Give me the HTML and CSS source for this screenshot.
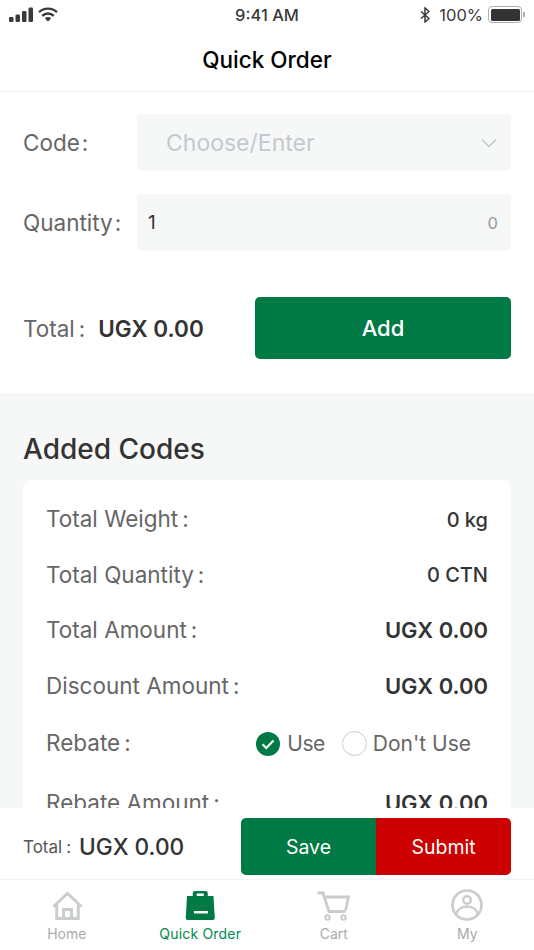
FILE: index.html
```html
<!DOCTYPE html>
<html lang="en">
<head>
<meta charset="utf-8">
<title>Quick Order</title>
<link rel="stylesheet" href="styles.css">
</head>
<body>
<div class="app">
  <div class="status">
    <div class="status-left">
      <svg class="sig" width="25" height="15" viewBox="0 0 25 15"><rect x="0" y="10" width="4.500" height="5" rx="1.200"/><rect x="6.500" y="7.500" width="4.500" height="7.500" rx="1.200"/><rect x="13" y="4" width="4.500" height="11" rx="1.200"/><rect x="19.500" y="0.500" width="4.500" height="14.500" rx="1.200"/></svg>
      <svg class="wifi" width="20" height="15" viewBox="0 0 20 15"><path d="M1 5.200a13 13 0 0 1 18 0" fill="none" stroke="#3a3a3a" stroke-width="2.300"/><path d="M4.200 8.800a8.400 8.400 0 0 1 11.600 0" fill="none" stroke="#3a3a3a" stroke-width="2.300"/><path d="M6.900 11.300a4.600 4.600 0 0 1 6.200 0L10 14.800z" fill="#3a3a3a"/></svg>
    </div>
    <div class="time">9:41 AM</div>
    <div class="status-right">
      <svg width="10" height="16" viewBox="0 0 10 16"><path d="M1 4.500l8 7L5 15V1l4 3.500L1 11.500" fill="none" stroke="#3a3a3a" stroke-width="1.500"/></svg>
      <span class="pct">100%</span>
      <span class="battery"><span class="battery-fill"></span></span><span class="battery-tip"></span>
    </div>
  </div>
  <header class="nav">Quick Order</header>

  <main class="main">
    <section class="form">
      <div class="field">
        <span class="label">Code<i class="colon tight">:</i></span>
        <div class="box"><span class="placeholder">Choose/Enter</span>
          <svg width="16" height="10" viewBox="0 0 16 10"><path d="M1 1.500l7 7 7-7" fill="none" stroke="#c4c8cc" stroke-width="1.500"/></svg>
        </div>
      </div>
      <div class="field">
        <span class="label">Quantity<i class="colon tight">:</i></span>
        <div class="box qty"><span class="qty-val">1</span><span class="qty-count">0</span></div>
      </div>
      <div class="total-row">
        <div class="total"><span class="label">Total<i class="colon wide">:</i></span><strong class="total-val">UGX 0.00</strong></div>
        <button class="add">Add</button>
      </div>
    </section>

    <section class="added">
      <h2 class="added-title">Added Codes</h2>
      <div class="card">
        <div class="row"><span>Total Weight<i class="colon">:</i></span><b class="small">0 kg</b></div>
        <div class="row"><span>Total Quantity<i class="colon">:</i></span><b class="small">0 CTN</b></div>
        <div class="row"><span>Total Amount<i class="colon">:</i></span><b>UGX 0.00</b></div>
        <div class="row"><span>Discount Amount<i class="colon">:</i></span><b>UGX 0.00</b></div>
        <div class="row rebate"><span>Rebate<i class="colon">:</i></span>
          <div class="opts">
            <svg width="24" height="24" viewBox="0 0 24 24"><circle cx="12" cy="12" r="12" fill="#007a45"/><path d="M6.500 12.300l3.800 3.700 7.200-7.400" fill="none" stroke="#fff" stroke-width="2.200"/></svg>
            <span class="opt use">Use</span>
            <span class="radio"></span>
            <span class="opt dont">Don't Use</span>
          </div>
        </div>
        <div class="row"><span>Rebate Amount<i class="colon">:</i></span><b>UGX 0.00</b></div>
      </div>
    </section>
  </main>

  <div class="bar">
    <div class="bar-total"><span class="bar-label">Total<i class="colon">:</i></span><span class="bar-val">UGX 0.00</span></div>
    <div class="actions"><button class="save">Save</button><button class="submit">Submit</button></div>
  </div>

  <nav class="tabs">
    <div class="tab">
      <svg width="46" height="34" viewBox="0 0 46 34"><path d="M9.500 17.500L23.500 4.500l14 13M12.750 15v14.500h21.500V15M19.500 29.500v-9h8v9" fill="none" stroke="#c9cdcb" stroke-width="3"/></svg>
      <span>Home</span>
    </div>
    <div class="tab active">
      <svg width="46" height="34" viewBox="0 0 46 34"><path d="M10 7h5.750V4a2 2 0 0 1 2-2h11a2 2 0 0 1 2 2v3H36.500l1.250 22a2 2 0 0 1-2 2h-25a2 2 0 0 1-2-2zM19.750 4.500V7h7V4.500zM17 22v2.500h14V22z" fill="#007a45" fill-rule="evenodd"/></svg>
      <span>Quick Order</span>
    </div>
    <div class="tab">
      <svg width="46" height="34" viewBox="0 0 46 34"><path d="M6.500 4h5.500l6 18.500h16.500M13.200 8H37.500l-3 13.500" fill="none" stroke="#c9cdcb" stroke-width="2.800"/><circle cx="16.500" cy="28.500" r="2.200" fill="none" stroke="#c9cdcb" stroke-width="2"/><circle cx="32.500" cy="28.500" r="2.200" fill="none" stroke="#c9cdcb" stroke-width="2"/></svg>
      <span>Cart</span>
    </div>
    <div class="tab">
      <svg width="46" height="34" viewBox="0 0 46 34"><circle cx="23" cy="16" r="14.500" fill="none" stroke="#c9cdcb" stroke-width="2.700"/><circle cx="23" cy="11" r="3.800" fill="none" stroke="#c9cdcb" stroke-width="2.500"/><path d="M12 26c1-5 5-8.500 11-8.500s10 3.500 11 8.500" fill="none" stroke="#c9cdcb" stroke-width="2.500"/></svg>
      <span>My</span>
    </div>
  </nav>
</div>
</body>
</html>
```
FILE: styles.css
```css
* { box-sizing: border-box; }
html, body { margin: 0; padding: 0; }
body { font-family: Inter, "Liberation Sans", Arial, sans-serif; background: #fff; }
.app { width: 534px; height: 950px; display: flex; flex-direction: column; overflow: hidden; background: #fff; }
.colon { font-style: normal; margin-left: 4px; }
.colon.tight { margin-left: 2px; }
.colon.wide { margin-right: 13px; }

.status { height: 31px; flex: none; display: flex; align-items: center; justify-content: space-between; padding: 0 9px 2px 9px; position: relative; color: #3a3a3a; }
.status-left { display: flex; align-items: center; gap: 4px; }
.sig { fill: #3a3a3a; }
.time { position: absolute; left: 0; right: 0; text-align: center; font-size: 16.500px; font-weight: 500; }
.status-right { display: flex; align-items: center; font-size: 16.500px; }
.pct { margin: 0 5px 0 9px; }
.battery { width: 34px; height: 17px; border: 1.500px solid #b0b0b0; border-radius: 4px; padding: 1.500px; display: block; }
.battery-fill { display: block; height: 100%; background: #333; border-radius: 1.500px; }
.battery-tip { width: 2px; height: 5px; background: #b0b0b0; margin-left: 1px; }

.nav { height: 61px; flex: none; display: flex; align-items: center; justify-content: center; font-size: 22.500px; font-weight: 500; color: #000; border-bottom: 1px solid #eeeeee; padding-bottom: 4px; }

.main { flex: 1; min-height: 0; overflow: hidden; background: #f6f8f7; }
.form { background: #fff; padding: 22px 23px 34px; }
.field { display: flex; align-items: center; height: 57px; margin-bottom: 23px; }
.label { font-size: 22.500px; color: #666; white-space: nowrap; }
.field .label { width: 114px; flex: none; }
.box { flex: 1; height: 57px; background: #f6f8f7; border-radius: 4px; display: flex; align-items: center; justify-content: space-between; padding: 0 14px 0 29px; }
.placeholder { font-size: 23px; color: #c4c8d0; }
.qty { padding: 0 13px 0 11px; }
.qty-val { font-size: 19px; color: #333; }
.qty-count { font-size: 16.500px; color: #999; }
.total-row { display: flex; align-items: center; justify-content: space-between; height: 62px; margin-top: 46px; }
.total { display: flex; align-items: center; }
.total-val { font-size: 22.500px; color: #333; font-weight: 600; }
.add { width: 256px; height: 62px; border: 0; border-radius: 5px; background: #007a45; color: #fff; font: inherit; font-size: 22px; font-weight: 500; }

.added { padding: 0 23px; }
.added-title { margin: 0; padding-top: 38px; height: 87px; font-size: 28px; line-height: 36px; font-weight: 500; color: #333; }
.card { background: #fff; border-radius: 8px 8px 0 0; padding: 12px 23px; }
.row { height: 55.600px; display: flex; align-items: center; justify-content: space-between; font-size: 22.500px; color: #666; white-space: nowrap; }
.row > span:first-child { margin-bottom: 2px; }
.row b { color: #333; font-size: 22px; font-weight: 600; margin-bottom: 2px; }
.row b.small { font-size: 20px; font-weight: 500; margin-bottom: 0; }
.rebate { padding-top: 3px; }
.rebate + .row { padding-top: 12px; }
.opts { display: flex; align-items: center; margin-right: 17px; }
.opt { font-size: 21px; }
.use { margin-left: 7px; letter-spacing: -.5px; }
.dont { margin-left: 6px; }
.radio { width: 25px; height: 25px; border: 1.500px solid #ccc; border-radius: 50%; margin-left: 17px; }

.bar { height: 72px; flex: none; background: #fff; display: flex; align-items: center; justify-content: space-between; padding: 6px 23px 0; border-bottom: 1px solid #f2f2f2; }
.bar-total { display: flex; align-items: center; }
.bar-label { font-size: 17px; color: #555; margin-right: 8px; }
.bar-val { font-size: 22.700px; font-weight: 500; color: #333; }
.actions { display: flex; width: 270px; height: 57px; border-radius: 5px; overflow: hidden; }
.actions button { flex: 1; border: 0; color: #fff; font: inherit; font-size: 19.500px; }
.save { background: #007a45; }
.submit { background: #cc0000; }

.tabs { height: 70px; flex: none; display: flex; background: #fff; padding-top: 9px; }
.tab { flex: 1; display: flex; flex-direction: column; align-items: center; font-size: 14px; color: #aaa; gap: 2px; }
.tab.active { color: #008a4f; letter-spacing: .2px; }
```
